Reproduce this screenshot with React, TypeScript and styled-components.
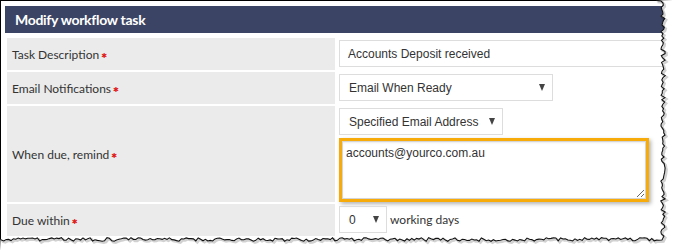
import React from 'react';
import styled, {createGlobalStyle} from "styled-components";

const GlobalStyle = createGlobalStyle`
  html, body {
    margin: 0;
    padding: 0;
    background: #fff;
  }
`

// torn paper edge, generated once with a fixed seed so it stays the same
const makeEdge = () => {
    let seed = 7;
    const r = () => {
        seed = (seed * 9301 + 49297) % 233280;
        return seed / 233280;
    };
    const pts: [number, number][] = [[656, 0.5], [661, 1]];
    for (let y = 3; y < 238; y += 2.2) {
        pts.push([663 + (r() - 0.5) * 4.5, y]);
    }
    pts.push([662, 240]);
    for (let x = 659; x > 0; x -= 2.4) {
        pts.push([x, 239.5 + (r() - 0.5) * 3.6]);
    }
    pts.push([0.5, 239]);
    return pts;
};

const edge = makeEdge();
const line = edge.map(([x, y]) => `${x.toFixed(1)},${y.toFixed(1)}`).join(' ');

const TornEdge = () => (
    <EdgeSvg width={673} height={251} viewBox="0 0 673 251">
        <path d={`M673,0 L${line} L0,251 L673,251 Z`} fill="#fff"/>
        <polyline points={line} fill="none" stroke="#000" strokeOpacity={0.18} strokeWidth={2.5}
                  transform="translate(1.5 1.5)"/>
        <polyline points={line} fill="none" stroke="#111" strokeWidth={1.1}/>
    </EdgeSvg>
);

const Required = () => <Star>✱</Star>

export default function App() {
    return (
        <>
            <GlobalStyle/>
            <Shot>
                <Card>
                    <Header>Modify workflow task</Header>
                    <Table>
                        <Label>Task Description<Required/></Label>
                        <Value>
                            <TextBox>Accounts Deposit received</TextBox>
                        </Value>

                        <Label>Email Notifications<Required/></Label>
                        <Value>
                            <Select width={214}>Email When Ready<Arrow/></Select>
                        </Value>

                        <Label>When due, remind<Required/></Label>
                        <Value>
                            <Select width={164}>Specified Email Address<Arrow/></Select>
                            <Highlight>
                                <Area defaultValue={'accounts@yourco.com.au'}/>
                            </Highlight>
                        </Value>

                        <Label>Due within<Required/></Label>
                        <Value>
                            <Inline>
                                <Select width={48}>0<Arrow/></Select>
                                <Unit>working days</Unit>
                            </Inline>
                        </Value>
                    </Table>
                </Card>
                <TornEdge/>
            </Shot>
        </>
    );
}

const Shot = styled.div`
  position: relative;
  width: 673px;
  height: 251px;
  overflow: hidden;
`

const Card = styled.div`
  width: 672px;
  height: 250px;
  border-top: 1px solid #000;
  border-left: 1px solid #000;
  background: #fff;
  overflow: hidden;
  box-sizing: border-box;
`

const EdgeSvg = styled.svg`
  position: absolute;
  left: 0;
  top: 0;
`

const Header = styled.div`
  margin: 5px 0 0 4px;
  height: 27px;
  width: 700px;
  background: #3b4465;
  color: #fff;
  font-family: Lato, sans-serif;
  font-weight: 700;
  font-size: 14px;
  letter-spacing: -0.3px;
  line-height: 27px;
  padding-left: 10px;
  box-sizing: border-box;
`

const Table = styled.div`
  margin: 5px 0 0 6px;
  width: 700px;
  display: grid;
  grid-template-columns: 328px 1fr;
  grid-auto-rows: minmax(32px, auto);
  column-gap: 4px;
  row-gap: 2px;
`

const Label = styled.div`
  background: #ebebeb;
  display: flex;
  align-items: center;
  padding-left: 5px;
  font-family: Lato, sans-serif;
  font-size: 12px;
  color: #333;
`

const Star = styled.span`
  color: #e01b1b;
  font-family: "DejaVu Sans", sans-serif;
  font-size: 7px;
  margin-left: 2px;
  margin-top: 3px;
`

const Value = styled.div`
  padding-top: 2px;
  display: flex;
  flex-direction: column;
  gap: 3px;
`

const fieldText = `
  font-family: "Liberation Sans", Arial, sans-serif;
  font-size: 12px;
  color: #333;
`

const TextBox = styled.div`
  ${fieldText};
  height: 27px;
  border: 1px solid #ddd;
  box-sizing: border-box;
  display: flex;
  align-items: center;
  padding-left: 8px;
`

const Select = styled.div<{ width: number }>`
  ${fieldText};
  width: ${p => p.width}px;
  height: 27px;
  border: 1px solid #ddd;
  box-sizing: border-box;
  display: flex;
  align-items: center;
  justify-content: space-between;
  padding: 0 7px 0 9px;
  flex-shrink: 0;
`

const Arrow = styled.span`
  width: 0;
  height: 0;
  border-left: 3.5px solid transparent;
  border-right: 3.5px solid transparent;
  border-top: 7px solid #444;
`

const Highlight = styled.div`
  width: 310px;
  height: 64px;
  border: 3px solid #f7ab0a;
  box-sizing: border-box;
  box-shadow: 2px 2px 4px rgba(0, 0, 0, 0.3);
  display: flex;
`

const Area = styled.textarea`
  ${fieldText};
  flex: 1;
  margin: 0;
  border: 1px solid #d4d4d4;
  box-shadow: inset 0 1px 2px rgba(0, 0, 0, 0.08);
  padding: 4px 3px;
  outline: none;
  resize: both;
  line-height: 14px;
`

const Inline = styled.div`
  display: flex;
  align-items: center;
  gap: 3px;
`

const Unit = styled.span`
  font-family: Lato, sans-serif;
  font-size: 12px;
  color: #333;
`
